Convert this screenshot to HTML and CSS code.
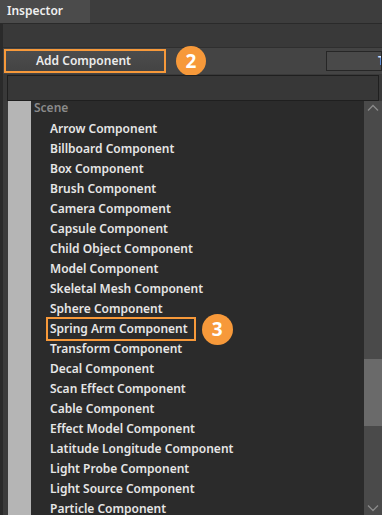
FILE: index.html
```html
<!DOCTYPE html>
<html lang="en">
<head>
  <meta charset="UTF-8">
  <meta name="viewport" content="width=device-width,initial-scale=1">
  <title>Inspector</title>
  <link rel="stylesheet" href="styles.css">
</head>
<body>
<div class="tabs">
  <div class="tab">Inspector</div>
</div>

<div class="body">
  <div class="toolbar"></div>

  <!-- add component row -->
  <div class="actions">
    <div class="add-btn">Add Component</div>
    <div class="step">2</div>
    <div class="spacer"></div>
    <div class="other-btn">T</div>
  </div>

  <div class="search"></div>

  <div class="list">
    <div class="gutter"></div>
    <div class="items">
      <div class="group">Scene</div>
      <div class="item">Arrow Component</div>
      <div class="item">Billboard Component</div>
      <div class="item">Box Component</div>
      <div class="item">Brush Component</div>
      <div class="item">Camera Compoment</div>
      <div class="item">Capsule Component</div>
      <div class="item">Child Object Component</div>
      <div class="item">Model Component</div>
      <div class="item">Skeletal Mesh Component</div>
      <div class="item">Sphere Component</div>
      <div class="item">
        <span class="picked">Spring Arm Component</span>
        <span class="step small">3</span>
      </div>
      <div class="item">Transform Component</div>
      <div class="item">Decal Component</div>
      <div class="item">Scan Effect Component</div>
      <div class="item">Cable Component</div>
      <div class="item">Effect Model Component</div>
      <div class="item">Latitude Longitude Component</div>
      <div class="item">Light Probe Component</div>
      <div class="item">Light Source Component</div>
      <div class="item">Particle Component</div>
    </div>
    <div class="scrollbar">
      <svg class="arrow" width="12" height="8" viewBox="0 0 12 8"><path d="M1 6.5 L6 1.5 L11 6.5" fill="none" stroke="#8a8a8a" stroke-width="1.3"/></svg>
      <div class="track">
        <div class="thumb"></div>
      </div>
      <svg class="arrow" width="12" height="8" viewBox="0 0 12 8"><path d="M1 1.5 L6 6.5 L11 1.5" fill="none" stroke="#8a8a8a" stroke-width="1.3"/></svg>
    </div>
  </div>
</div>
</body>
</html>
```

FILE: styles.css
```css
* { box-sizing: border-box; margin: 0; padding: 0 }
html, body { height: 100% }
body {
  font-family: "Noto Sans", sans-serif;
  font-size: 12px;
  font-weight: 600;
  color: #e6e6e6;
  background: #2b2b2b;
  display: flex;
  flex-direction: column;
  overflow: hidden;
}
.tabs {
  height: 23px;
  background: #3d3d3d;
  display: flex;
}
.tab {
  width: 90px;
  background: #4b4b4b;
  padding-left: 7px;
  font-size: 12px;
  line-height: 21px;
  color: #f0f0f0;
}
.body {
  flex: 1;
  display: flex;
  flex-direction: column;
  border-top: 1px solid #2a2a2a;
  border-left: 3px solid #2a2a2a;
  background: #393939;
  min-height: 0;
}
.toolbar {
  height: 24px;
  border-bottom: 1px solid #2f2f2f;
}
.actions {
  height: 26px;
  background: #444;
  display: flex;
  align-items: center;
  padding-left: 1px;
}
.add-btn {
  width: 162px;
  height: 24px;
  border: 2px solid #f7993a;
  background: linear-gradient(#4c4c4c, #444);
  text-align: center;
  line-height: 20px;
  padding-right: 3px;
  color: #ececec;
}
.step {
  width: 30px;
  height: 30px;
  border-radius: 50%;
  background: #f7993a;
  color: #fff;
  font-size: 19px;
  font-weight: 700;
  text-align: center;
  line-height: 30px;
  margin: -4px 0 -4px 10px;
}
.step.small {
  width: 31px;
  height: 31px;
  line-height: 31px;
  margin: -6px 0 -6px 6px;
}
.spacer { flex: 1 }
.other-btn {
  width: 56px;
  height: 20px;
  border: 1px solid #262626;
  background: #494949;
  line-height: 18px;
  padding-left: 51px;
  overflow: hidden;
  color: #cfe0ff;
}
.search {
  height: 26px;
  margin: 1px 3px 0 4px;
  border: 1px solid #1f1f1f;
  background: #373737;
}
.list {
  flex: 1;
  display: flex;
  background: #2b2b2b;
  border-left: 5px solid #3b3b3b;
  min-height: 0;
}
.gutter {
  width: 23px;
  background: #b5b5b5;
}
.items {
  flex: 1;
  padding-left: 3px;
}
.group {
  height: 18px;
  line-height: 13px;
  color: #8a8a8a;
}
.item {
  height: 20px;
  line-height: 20px;
  padding-left: 16px;
  display: flex;
  align-items: center;
  white-space: nowrap;
}
.picked {
  border: 2px solid #f7993a;
  padding: 0 6px 0 2px;
  margin: -2px 0 -2px -4px;
  line-height: 20px;
}
.scrollbar {
  width: 18px;
  background: #4a4a4a;
  display: flex;
  flex-direction: column;
  align-items: center;
}
.arrow { margin: 3px 0 }
.track {
  flex: 1;
  width: 100%;
  padding-top: 244px;
}
.thumb {
  height: 67px;
  background: #6a6a6a;
}
```
